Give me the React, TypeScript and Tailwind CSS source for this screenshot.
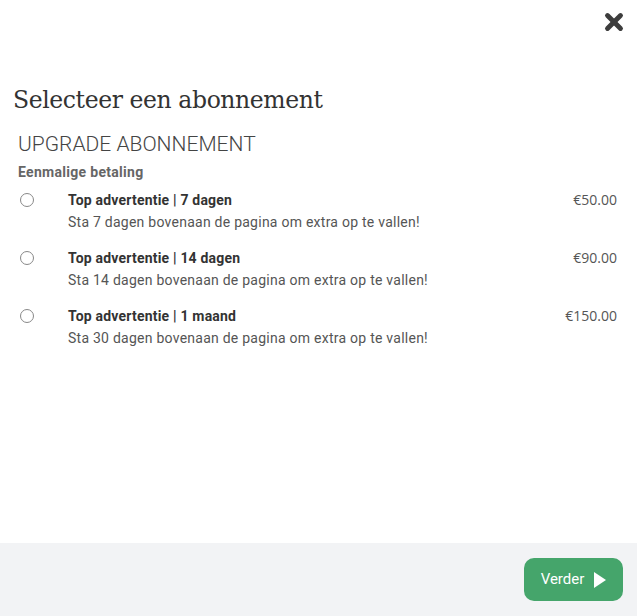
import { X } from "lucide-react"

const options = [
  { title: "Top advertentie | 7 dagen", desc: "Sta 7 dagen bovenaan de pagina om extra op te vallen!", price: "€50.00" },
  { title: "Top advertentie | 14 dagen", desc: "Sta 14 dagen bovenaan de pagina om extra op te vallen!", price: "€90.00" },
  { title: "Top advertentie | 1 maand", desc: "Sta 30 dagen bovenaan de pagina om extra op te vallen!", price: "€150.00" },
]

export default function App() {
  return (
    <div className="w-[637px] h-[616px] bg-white flex flex-col font-['Roboto',sans-serif] text-[#444]">
      {/* Header */}
      <div className="flex justify-end pt-[9px] pr-[10px]">
        <X className="w-[26px] h-[26px] text-[#3d3d3d]" strokeWidth={4.5} />
      </div>

      <div className="flex-1 px-[13px]">
        <h2 className="mt-[50px] text-[23.5px] leading-[30px] font-['DejaVu_Serif',serif] text-[#333] tracking-[-0.4px]">
          Selecteer een abonnement
        </h2>

        <div className="pl-[5px] mt-[16px]">
          <h3 className="text-[21px] leading-[26px] font-light text-[#444]">UPGRADE ABONNEMENT</h3>
          <p className="mt-[5px] text-[14px] font-bold text-[#666] tracking-[0.3px]">Eenmalige betaling</p>

          <div className="mt-[7px] flex flex-col gap-[16px]">
            {options.map((o) => (
              <label key={o.title} className="flex items-start">
                <span className="mt-[3px] ml-[2px] w-[14px] h-[14px] rounded-full border border-[#888] bg-white shrink-0" />
                <div className="ml-[34px] flex-1">
                  <div className="text-[14px] leading-[20px] font-bold text-[#333] tracking-[0.2px]">{o.title}</div>
                  <div className="mt-[2px] text-[14px] leading-[20px] text-[#555] tracking-[0.25px]">{o.desc}</div>
                </div>
                <span className="text-[14px] leading-[20px] text-[#555] font-['Open_Sans',sans-serif] pr-[7px]">
                  {o.price}
                </span>
              </label>
            ))}
          </div>
        </div>
      </div>

      {/* Footer */}
      <div className="h-[73px] bg-[#f2f3f5] flex items-center justify-end pr-[14px]">
        <button className="w-[99px] h-[43px] rounded-[10px] bg-[#45a56b] text-white text-[15px] flex items-center justify-center gap-[10px]">
          Verder
          <svg width="12" height="16" viewBox="0 0 12 16" className="fill-white">
            <path d="M0 0 L12 8 L0 16 Z" />
          </svg>
        </button>
      </div>
    </div>
  )
}
